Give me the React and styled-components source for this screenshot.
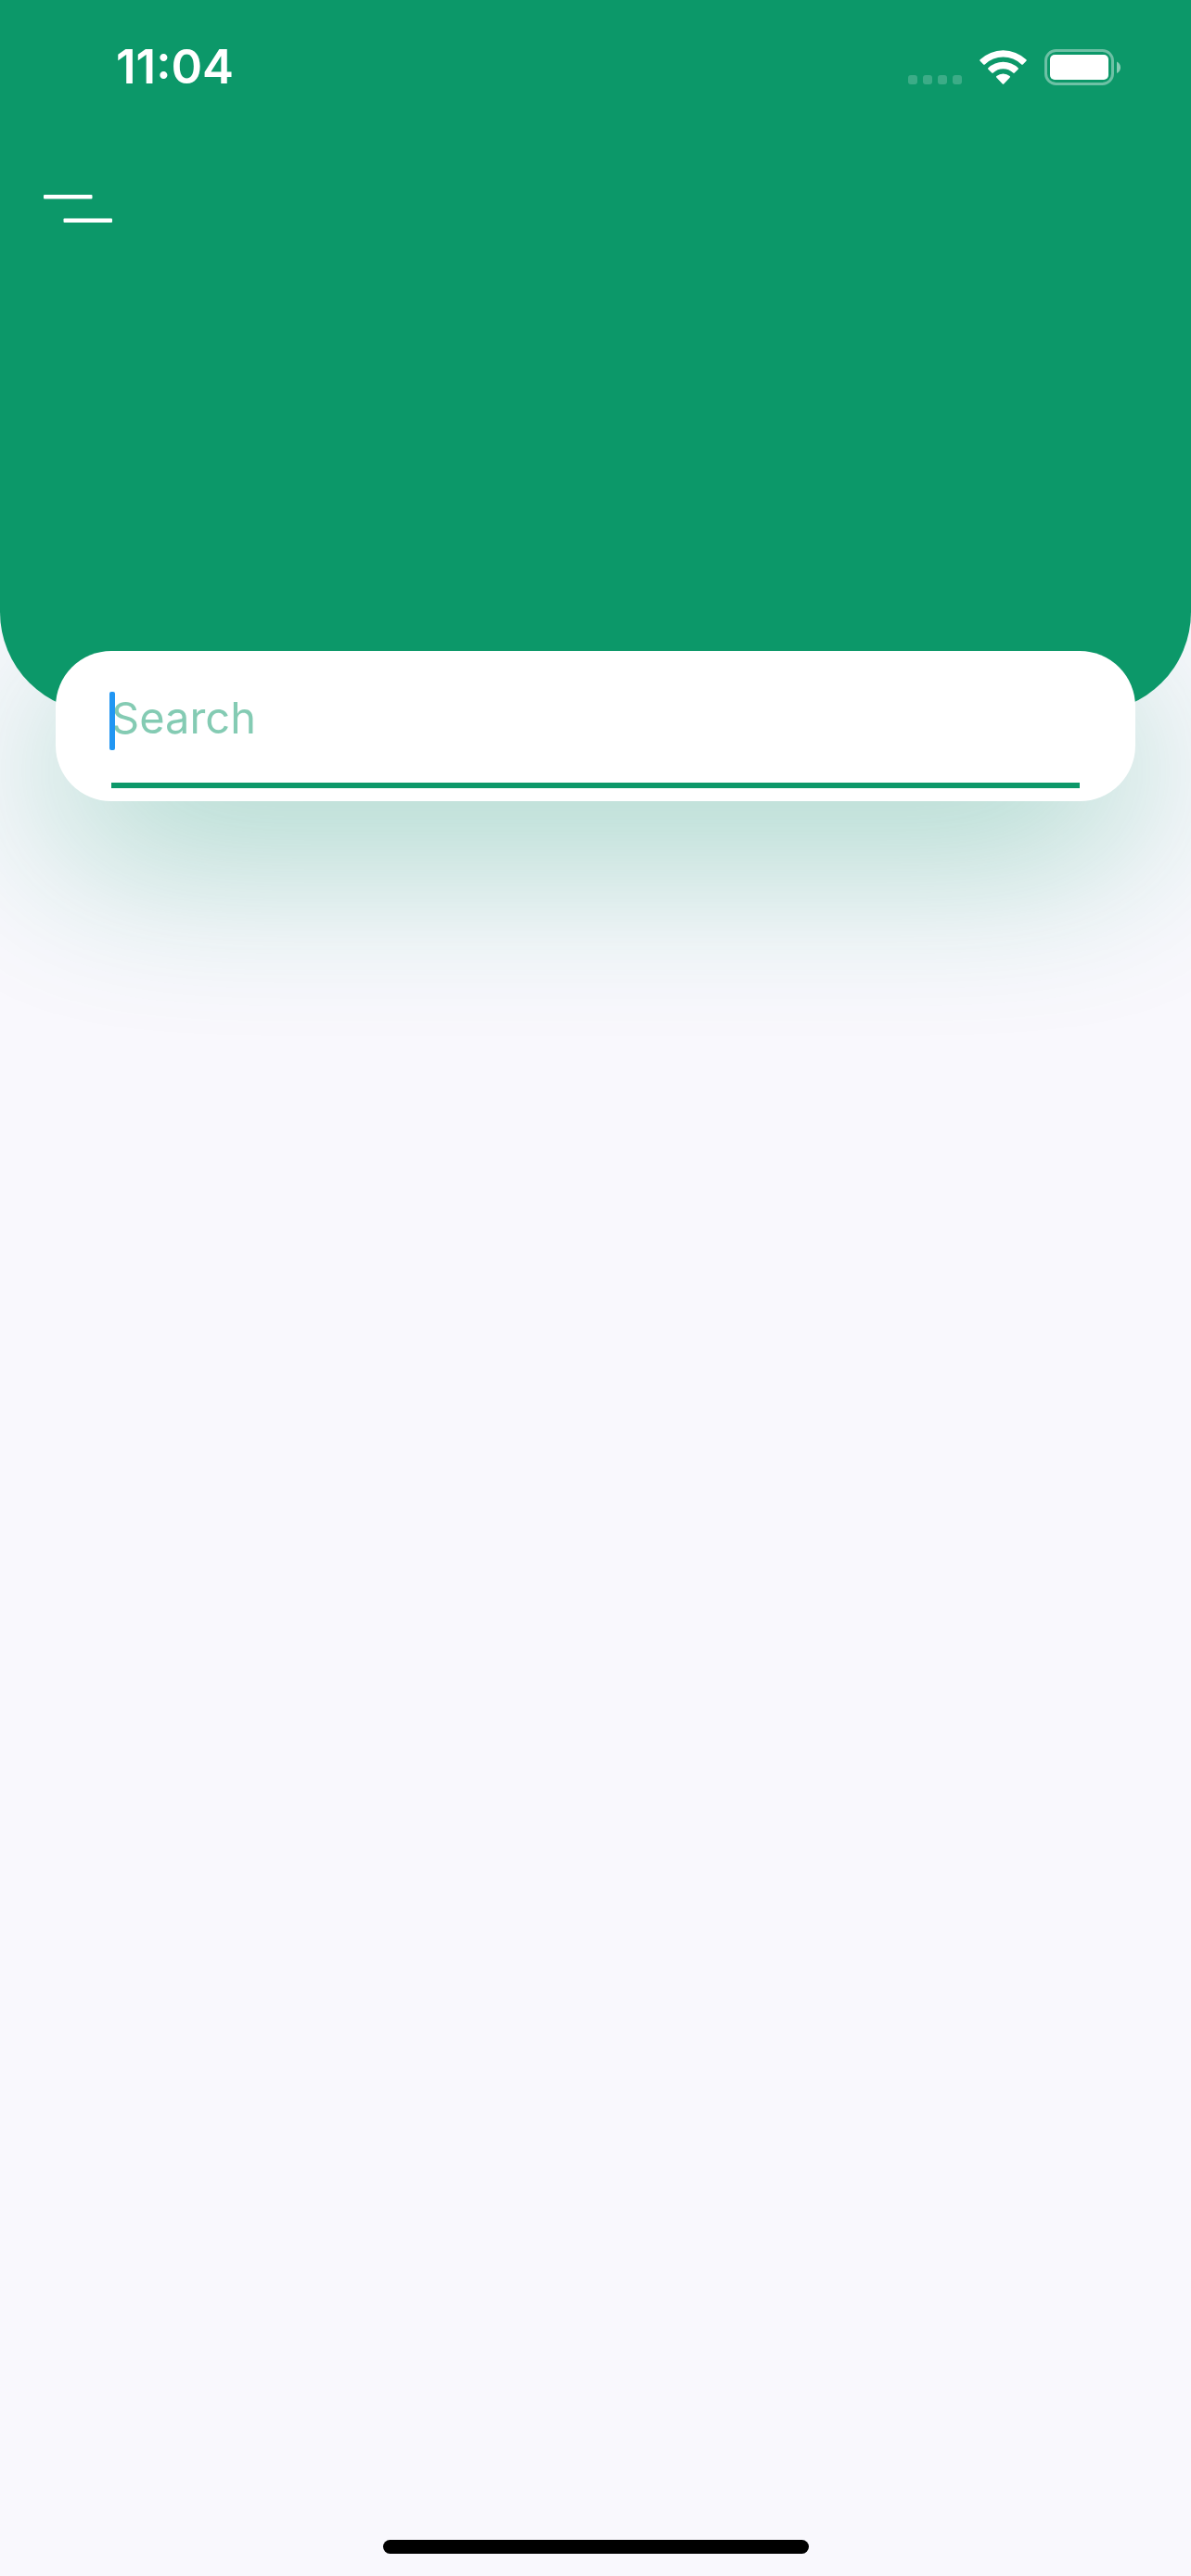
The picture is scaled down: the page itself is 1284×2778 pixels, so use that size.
import React from "react";
import styled, { createGlobalStyle } from "styled-components";

const color = {
  primary: "#0c9869",
  background: "#f9f8fd",
  cursor: "#2196f3",
};

const GlobalStyle = createGlobalStyle`
  *, *::before, *::after { box-sizing: border-box; }
  body {
    margin: 0;
    background: ${color.background};
    font-family: Inter, "Liberation Sans", sans-serif;
  }
`;

const Screen = styled.div`
  display: flex;
  flex-direction: column;
  min-height: 100vh;
  overflow: hidden;
  isolation: isolate;
  background: ${color.background};
`;

const Header = styled.header`
  min-height: 768px;
  border-radius: 0 0 108px 108px;
  background: ${color.primary};
  color: #fff;
`;

const StatusBar = styled.div`
  display: flex;
  align-items: center;
  justify-content: space-between;
  height: 144px;
  padding: 0 76px 0 125px;
`;

const Clock = styled.time`
  font-size: 51px;
  font-weight: 600;
  line-height: 60px;
`;

const StatusIcons = styled.svg`
  display: block;
  width: 230px;
  height: 40px;
`;

const AppBar = styled.nav`
  display: flex;
  align-items: center;
  height: 162px;
  padding: 0 24px;
`;

const MenuButton = styled.button`
  display: flex;
  align-items: center;
  justify-content: center;
  width: 120px;
  height: 120px;
  padding: 0;
  border: 0;
  background: none;
  color: inherit;
`;

const MenuGlyph = styled.svg`
  width: 74px;
  height: 30px;
`;

const Main = styled.main`
  flex: 1;
  padding: 0 60px;
`;

/* The glow sits behind the header, so it only tints the page below it. */
const SearchCard = styled.form`
  position: relative;
  height: 162px;
  margin-top: -66px;
  padding: 0 60px;
  border-radius: 60px;
  background: #fff;

  &::before {
    content: "";
    position: absolute;
    inset: 48px 0 -48px;
    z-index: -1;
    border-radius: 60px;
    background: ${color.primary};
    opacity: 0.4;
    filter: blur(98px);
  }
`;

const Field = styled.label`
  display: block;
  position: relative;
  height: 148px;
  border-bottom: 6px solid ${color.primary};
`;

const SearchInput = styled.input`
  display: block;
  width: 100%;
  height: 142px;
  padding: 0;
  border: 0;
  outline: 0;
  background: none;
  color: #000;
  font: inherit;
  font-size: 47px;
  line-height: 60px;

  &::placeholder {
    color: ${color.primary};
    opacity: 0.5;
  }
`;

const Cursor = styled.span`
  position: absolute;
  top: 44px;
  left: -2px;
  width: 6px;
  height: 63px;
  border-radius: 2px;
  background: ${color.cursor};
`;

const HomeIndicator = styled.div`
  align-self: center;
  width: 459px;
  height: 15px;
  margin-bottom: 24px;
  border-radius: 8px;
  background: #000;
`;

const dots = [0, 16, 32, 48];

export default function App() {
  return (
    <Screen>
      <GlobalStyle />
      <Header>
        <StatusBar>
          <Clock>11:04</Clock>
          <StatusIcons viewBox="0 0 230 40" fill="#fff" aria-hidden="true">
            {dots.map((x) => (
              <rect key={x} x={x + 1} y="29" width="10" height="10" rx="3" opacity="0.2" />
            ))}
            <path d="M78.6 12.2a36.3 36.3 0 0 1 49.8 0q.8.8 0 1.6l-3.6 3.6q-.8.8-1.6 0a28.6 28.6 0 0 0-39.4 0q-.8.8-1.6 0l-3.6-3.6q-.8-.8 0-1.6Z" />
            <path d="M87.4 21.2a23.4 23.4 0 0 1 32.2 0q.8.8 0 1.6l-3.8 3.8q-.8.8-1.6 0a15.6 15.6 0 0 0-21.4 0q-.8.8-1.6 0l-3.8-3.8q-.8-.8 0-1.6Z" />
            <path d="M96.4 30.1a11.2 11.2 0 0 1 14.2 0q.9.8 0 1.7l-6.4 6.7q-.7.7-1.4 0l-6.4-6.7q-.9-.9 0-1.7Z" />
            <rect x="149.5" y="2.5" width="72" height="36" rx="11" fill="none" stroke="#fff" strokeWidth="3" opacity="0.4" />
            <rect x="154" y="7" width="63" height="27" rx="5" />
            <path d="M226 14.5c5.4 2 5.4 10.5 0 12.5Z" opacity="0.5" />
          </StatusIcons>
        </StatusBar>
        <AppBar>
          <MenuButton type="button" aria-label="Menu">
            <MenuGlyph viewBox="0 0 74 30" fill="currentColor" aria-hidden="true">
              <rect x="0" y="0" width="52.5" height="4.6" rx="1" />
              <rect x="21.5" y="25.4" width="52.5" height="4.6" rx="1" />
            </MenuGlyph>
          </MenuButton>
        </AppBar>
      </Header>
      <Main>
        <SearchCard role="search" onSubmit={(event) => event.preventDefault()}>
          <Field>
            <SearchInput type="text" placeholder="Search" aria-label="Search" />
            <Cursor />
          </Field>
        </SearchCard>
      </Main>
      <HomeIndicator />
    </Screen>
  );
}
